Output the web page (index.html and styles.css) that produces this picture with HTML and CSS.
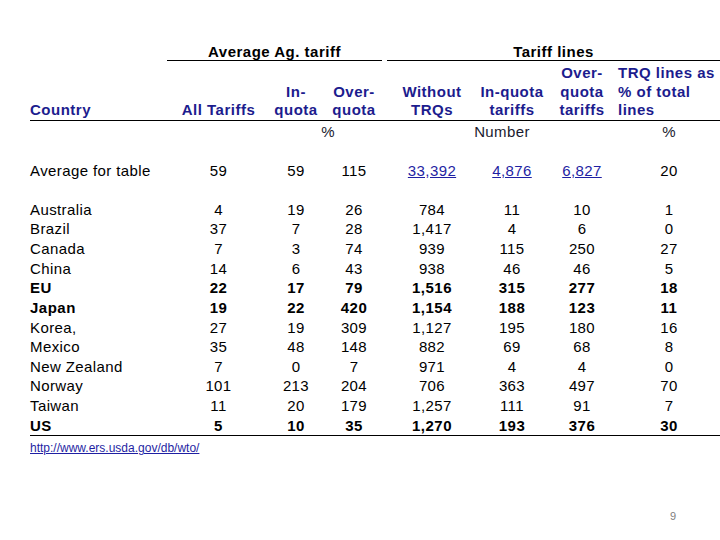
FILE: index.html
```html
<!DOCTYPE html>
<html lang="en">
<head>
<meta charset="utf-8">
<title>Average Ag. tariff and Tariff lines</title>
<link rel="stylesheet" href="styles.css">
</head>
<body>
<div class="slide">
  <table class="tariffs">
    <colgroup>
      <col class="c-country">
      <col class="c-all">
      <col class="c-inq">
      <col class="c-overq">
      <col class="c-without">
      <col class="c-inqt">
      <col class="c-overqt">
      <col class="c-trq">
    </colgroup>
    <thead>
      <tr class="group-row">
        <th></th>
        <th colspan="3"><div class="group-title first">Average Ag. tariff</div></th>
        <th colspan="4"><div class="group-title second">Tariff lines</div></th>
      </tr>
      <tr class="head-row">
        <th class="left">Country</th>
        <th>All Tariffs</th>
        <th>In-<br>quota</th>
        <th>Over-<br>quota</th>
        <th>Without<br>TRQs</th>
        <th>In-quota<br>tariffs</th>
        <th>Over-<br>quota<br>tariffs</th>
        <th class="left">TRQ lines as<br>% of total<br>lines</th>
      </tr>
    </thead>
    <tbody>
      <tr class="unit-row">
        <td></td>
        <td></td>
        <td colspan="2">%</td>
        <td colspan="3">Number</td>
        <td>%</td>
      </tr>
      <tr class="avg-row">
        <td class="left">Average for table</td>
        <td>59</td>
        <td>59</td>
        <td>115</td>
        <td><a href="#">33,392</a></td>
        <td><a href="#">4,876</a></td>
        <td><a href="#">6,827</a></td>
        <td>20</td>
      </tr>
      <tr class="data-row first-data">
        <td class="left">Australia</td><td>4</td><td>19</td><td>26</td><td>784</td><td>11</td><td>10</td><td>1</td>
      </tr>
      <tr class="data-row">
        <td class="left">Brazil</td><td>37</td><td>7</td><td>28</td><td>1,417</td><td>4</td><td>6</td><td>0</td>
      </tr>
      <tr class="data-row">
        <td class="left">Canada</td><td>7</td><td>3</td><td>74</td><td>939</td><td>115</td><td>250</td><td>27</td>
      </tr>
      <tr class="data-row">
        <td class="left">China</td><td>14</td><td>6</td><td>43</td><td>938</td><td>46</td><td>46</td><td>5</td>
      </tr>
      <tr class="data-row strong">
        <td class="left">EU</td><td>22</td><td>17</td><td>79</td><td>1,516</td><td>315</td><td>277</td><td>18</td>
      </tr>
      <tr class="data-row strong">
        <td class="left">Japan</td><td>19</td><td>22</td><td>420</td><td>1,154</td><td>188</td><td>123</td><td>11</td>
      </tr>
      <tr class="data-row">
        <td class="left">Korea,</td><td>27</td><td>19</td><td>309</td><td>1,127</td><td>195</td><td>180</td><td>16</td>
      </tr>
      <tr class="data-row">
        <td class="left">Mexico</td><td>35</td><td>48</td><td>148</td><td>882</td><td>69</td><td>68</td><td>8</td>
      </tr>
      <tr class="data-row">
        <td class="left">New Zealand</td><td>7</td><td>0</td><td>7</td><td>971</td><td>4</td><td>4</td><td>0</td>
      </tr>
      <tr class="data-row">
        <td class="left">Norway</td><td>101</td><td>213</td><td>204</td><td>706</td><td>363</td><td>497</td><td>70</td>
      </tr>
      <tr class="data-row">
        <td class="left">Taiwan</td><td>11</td><td>20</td><td>179</td><td>1,257</td><td>111</td><td>91</td><td>7</td>
      </tr>
      <tr class="data-row strong last-data">
        <td class="left">US</td><td>5</td><td>10</td><td>35</td><td>1,270</td><td>193</td><td>376</td><td>30</td>
      </tr>
    </tbody>
  </table>
  <div class="source"><a href="#">http://www.ers.usda.gov/db/wto/</a></div>
  <div class="page-num">9</div>
</div>
</body>
</html>
```

FILE: styles.css
```css
html, body {
  margin: 0;
  padding: 0;
  background: #ffffff;
}

body {
  font-family: "Liberation Sans", Arial, sans-serif;
  color: #000000;
}

.slide {
  width: 720px;
  height: 540px;
  box-sizing: border-box;
  padding: 42px 0 0 30px;
  overflow: hidden;
}

.tariffs {
  border-collapse: collapse;
  table-layout: fixed;
  width: 690px;
  font-size: 15px;
  letter-spacing: 0.4px;
}

.tariffs th,
.tariffs td {
  padding: 0;
  text-align: center;
  white-space: nowrap;
}

.c-country { width: 137px; }
.c-all { width: 103px; }
.c-inq { width: 52px; }
.c-overq { width: 64px; }
.c-without { width: 92px; }
.c-inqt { width: 68px; }
.c-overqt { width: 72px; }
.c-trq { width: 102px; }

.tariffs .left {
  text-align: left;
}

.group-row th {
  vertical-align: bottom;
}

.group-title {
  font-weight: bold;
  letter-spacing: 0.5px;
  padding-top: 2px;
  line-height: 16px;
  border-bottom: 1px solid #000000;
  color: #000000;
}

.group-title.first {
  margin-right: 4px;
}

.group-title.second {
  margin-left: 1px;
}

.head-row th {
  vertical-align: bottom;
  padding-top: 3px;
  line-height: 18.5px;
  font-weight: bold;
  letter-spacing: 0.5px;
  color: #1c1c8e;
  border-bottom: 1px solid #000000;
}

.unit-row td {
  padding-top: 1px;
  line-height: 19px;
  color: #1a1a2e;
}

.avg-row td {
  padding-top: 20px;
  line-height: 19.6px;
}

.avg-row a {
  color: #1f1fa3;
  text-decoration: underline;
}

.data-row td {
  line-height: 19.64px;
}

.data-row.first-data td {
  padding-top: 19.6px;
}

.data-row.strong td {
  font-weight: bold;
  letter-spacing: 0.5px;
}

.data-row.last-data td {
  border-bottom: 1px solid #000000;
}

.source {
  margin-top: 5px;
  font-size: 12px;
  line-height: 14px;
}

.source a {
  color: #1f1fa3;
  text-decoration: underline;
}

.page-num {
  margin-top: 54px;
  margin-right: 44px;
  text-align: right;
  font-size: 11px;
  line-height: 14px;
  color: #808080;
}
```
